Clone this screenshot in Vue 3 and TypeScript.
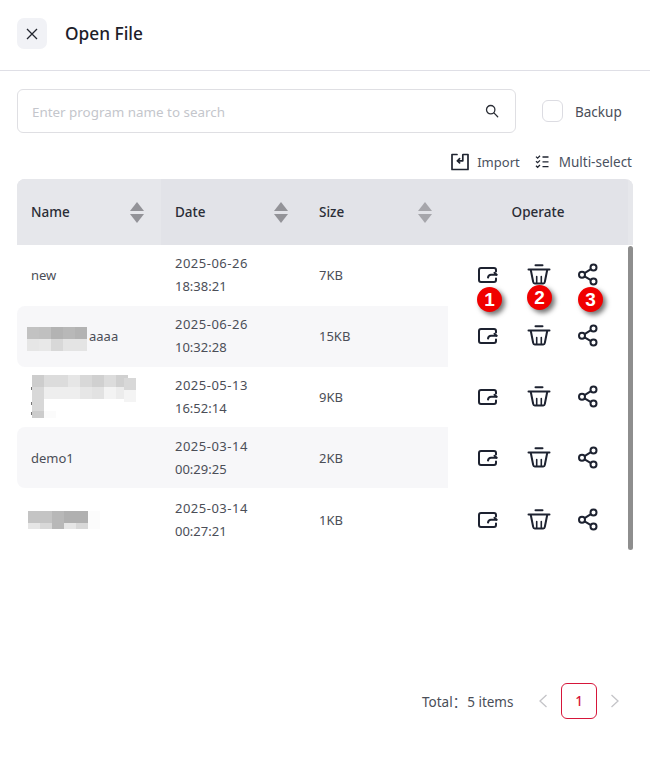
<script setup lang="ts">
interface Cell { x: number; y: number; w: number; h: number; c: string }
interface Row { name?: string; date: string; time: string; size: string; mosaic?: Cell[] }

function strip(y: number, h: number, x0: number, w: number, cs: string[]): Cell[] {
  return cs.map((c, i) => ({ x: x0 + i * w, y, w, h, c }))
}

const rows: Row[] = [
  { name: 'new', date: '2025-06-26', time: '18:38:21', size: '7KB' },
  {
    name: 'aaaa', date: '2025-06-26', time: '10:32:28', size: '15KB',
    mosaic: [
      ...strip(0, 12, 0, 12, ['#c2c2c2', '#c0c0c0', '#b3b3b3', '#b8b8b8', '#b3b3b3']),
      ...strip(12, 12, 0, 12, ['#e6e6e6', '#e8e8e8', '#d8d8d8', '#e4e4e4', '#e4e4e4'])
    ]
  },
  {
    date: '2025-05-13', time: '16:52:14', size: '9KB',
    mosaic: [
      ...strip(0, 12, 5, 12, ['#cdcdcd', '#dcdcdc', '#dcdcdc', '#e6e6e6', '#d8d8d8', '#d0d0d0', '#dcdcdc', '#d0d0d0']),
      ...strip(12, 12, 5, 12, ['#d8d8d8', '#eeeeee', '#eeeeee', '#eeeeee', '#e6e6e6', '#e2e2e2', '#f3f3f3', '#ececec']),
      { x: 97, y: 3, w: 12, h: 12, c: '#d8d8d8' },
      { x: 97, y: 15, w: 12, h: 12, c: '#f4f4f4' },
      { x: 5, y: 24, w: 12, h: 12, c: '#d8d8d8' },
      { x: 5, y: 36, w: 12, h: 7, c: '#cccccc' },
      { x: 17, y: 36, w: 12, h: 7, c: '#fbfbfb' },
      { x: 4, y: 12, w: 1, h: 3, c: '#777777' },
      { x: 4, y: 27, w: 1, h: 3, c: '#777777' },
      { x: 4, y: 37, w: 1, h: 3, c: '#777777' }
    ]
  },
  { name: 'demo1', date: '2025-03-14', time: '00:29:25', size: '2KB' },
  {
    date: '2025-03-14', time: '00:27:21', size: '1KB',
    mosaic: [
      ...strip(0, 12, 1, 12, ['#c4c4c4', '#c4c4c4', '#b8b8b8', '#b0b0b0', '#b0b0b0']),
      ...strip(12, 6, 1, 12, ['#e6e6e6', '#d8d8d8', '#b8b8b8', '#e6e6e6', '#d8d8d8']),
      { x: 61, y: 0, w: 12, h: 18, c: '#fcfcfc' }
    ]
  }
]

const headers = ['Name', 'Date', 'Size']
</script>

<template>
  <div class="page">
    <header class="head">
      <button class="close" type="button" aria-label="Close">
        <svg width="14" height="14" viewBox="0 0 14 14"><path d="M2 2l10 10M12 2L2 12" stroke="#23262f" stroke-width="1.3" fill="none" /></svg>
      </button>
      <h1 class="title">Open File</h1>
    </header>

    <div class="search-row">
      <div class="search">
        <span class="placeholder">Enter program name to search</span>
        <svg width="14" height="14" viewBox="0 0 14 14" fill="none" stroke="#2b2e36" stroke-width="1.3"><circle cx="5.7" cy="5.7" r="4.2" /><path d="M8.9 8.9l3.8 3.8" stroke-linecap="round" /></svg>
      </div>
      <label class="backup"><span class="check"></span><span class="backup-text">Backup</span></label>
    </div>

    <div class="tools">
      <span class="tool import">
        <svg width="18" height="18" viewBox="0 0 18 18" fill="none" stroke="#1f2430" stroke-width="1.7" stroke-linejoin="round" stroke-linecap="round"><path d="M6 1.500H1v15h16v-15h-5" /><path d="M11.800 2v5.800H6.500" /><path d="M8.600 5.700L6.500 7.800l2.100 2.100" /></svg>
        Import
      </span>
      <span class="tool multi">
        <svg width="14" height="14" viewBox="0 0 14 14" fill="none" stroke="#1f2430" stroke-width="1.3"><path d="M1 1.600l1.600 1.500L5 .8M1 6.200l1.600 1.500L5 5.400M1 10.800l1.600 1.500L5 10" /><path d="M7.500 2h6M7.500 6.800h6M7.500 11.600h6" /></svg>
        Multi-select
      </span>
    </div>

    <div class="table">
      <div class="thead">
        <div v-for="(h, i) in headers" :key="h" class="th" :class="{ first: i === 0, last: i === 2 }">
          <span>{{ h }}</span>
          <svg class="sort" width="14" height="21" viewBox="0 0 14 21"><path d="M7 0l7 9H0z" /><path d="M7 21l7-9H0z" /></svg>
        </div>
        <div class="th op">Operate</div>
        <div class="th gutter"></div>
      </div>
      <div class="tbody">
        <div class="list">
          <div v-for="(r, i) in rows" :key="i" class="row" :class="{ striped: i % 2 === 1 }">
            <div class="cell name">
              <span v-if="r.mosaic" class="mosaic">
                <i v-for="(m, j) in r.mosaic" :key="j" :style="{ left: m.x + 'px', top: m.y + 'px', width: m.w + 'px', height: m.h + 'px', background: m.c }"></i>
              </span>
              <span v-if="r.name" class="nm">{{ r.name }}</span>
            </div>
            <div class="cell date"><div class="day">{{ r.date }}</div><div>{{ r.time }}</div></div>
            <div class="cell size">{{ r.size }}</div>
            <div class="cell ops">
              <svg width="22" height="22" viewBox="0 0 22 22" fill="none" stroke="#1d2230" stroke-width="2" stroke-linecap="round" stroke-linejoin="round"><path d="M20 7.500V6a2 2 0 0 0-2-2H5a2 2 0 0 0-2 2v10a2 2 0 0 0 2 2h13a2 2 0 0 0 2-2v-1.500" /><path d="M12 13.500c.3-1.700 1.400-2.700 3-2.700h5.500" /><path d="M18.500 8.800l2 2" /></svg>
              <svg class="trash" width="24" height="24" viewBox="0 0 24 24" fill="none" stroke="#1d2230" stroke-width="2" stroke-linecap="round" stroke-linejoin="round"><path d="M1.500 6.500h21" /><path d="M8.500 2.300h7" /><path d="M3.800 7l2.400 12a1.600 1.600 0 0 0 1.600 1.400h8.400a1.600 1.600 0 0 0 1.600-1.400l2.400-12" /><path d="M9.700 13.500V20M14.300 13.500V20" stroke-width="1.600" /></svg>
              <svg class="share" width="22" height="24" viewBox="0 0 22 24" fill="none" stroke="#1d2230" stroke-width="2"><circle cx="16.500" cy="4.600" r="3" /><circle cx="5" cy="11.800" r="3" /><circle cx="16.500" cy="18.600" r="3" /><path d="M7.600 10.200l6.300-4M7.600 13.300l6.300 3.800" /></svg>
            </div>
          </div>
        </div>
        <div class="scrollbar"></div>
        <span class="badge b1">1</span>
        <span class="badge b2">2</span>
        <span class="badge b3">3</span>
      </div>
    </div>

    <div class="pager">
      <span class="total">Total：<span class="gap">5 items</span></span>
      <svg class="arrow" width="12" height="14" viewBox="0 0 12 14" fill="none" stroke="#c4c4c8" stroke-width="1.300"><path d="M9.500 1L3 7l6.500 6" /></svg>
      <span class="pg">1</span>
      <svg class="arrow" width="12" height="14" viewBox="0 0 12 14" fill="none" stroke="#c4c4c8" stroke-width="1.300"><path d="M2.500 1L9 7l-6.500 6" /></svg>
    </div>
  </div>
</template>

<style scoped>
.page {
  width: 650px;
  height: 757px;
  box-sizing: border-box;
  background: #fff;
  font-family: "Noto Sans", "Noto Sans CJK SC", sans-serif;
  color: #3a3d45;
  font-size: 13px;
  overflow: hidden;
}
.head {
  height: 71px;
  box-sizing: border-box;
  border-bottom: 1px solid #dfdfe6;
  display: flex;
  align-items: center;
  padding: 0 17px 3px;
}
.close {
  width: 30px;
  height: 31px;
  border: 0;
  padding: 0;
  border-radius: 7px;
  background: #f1f2f6;
  display: flex;
  align-items: center;
  justify-content: center;
}
.title {
  margin: 0 0 0 18px;
  font-size: 17.300px;
  font-weight: 500;
  color: #1d2029;
}
.search-row {
  display: flex;
  align-items: center;
  padding: 18px 0 0 17px;
}
.search {
  width: 499px;
  height: 44px;
  box-sizing: border-box;
  border: 1px solid #dfdfe3;
  border-radius: 6px;
  display: flex;
  align-items: center;
  justify-content: space-between;
  padding: 0 16px 0 14px;
}
.placeholder { color: #c4c6cc; font-size: 13.400px; padding-top: 2px; }
.backup {
  margin-left: 26px;
  display: flex;
  align-items: center;
  gap: 12px;
  font-size: 13.500px;
  color: #4a4e58;
}
.backup-text { padding-top: 2px; }
.check {
  width: 21px;
  height: 22px;
  box-sizing: border-box;
  border: 1px solid #dcdce2;
  border-radius: 6px;
}
.tools {
  display: flex;
  justify-content: flex-end;
  align-items: center;
  gap: 15px;
  height: 20px;
  margin: 19px 18px 7px 0;
  font-size: 13.500px;
  color: #4a5160;
}
.tool { display: flex; align-items: center; }
.import { gap: 8px; font-size: 13px; }
.multi { gap: 10px; }
.table { margin: 0 17px; width: 616px; }
.thead {
  display: flex;
  height: 66px;
  border-radius: 8px 8px 0 0;
  overflow: hidden;
  background: #e2e3e8;
  font-weight: 500;
  font-size: 13.500px;
  color: #2a2d36;
}
.th {
  width: 144px;
  box-sizing: border-box;
  padding: 0 17px 0 14px;
  display: flex;
  align-items: center;
  justify-content: space-between;
}
.th.first { background: #e6e7eb; }
.sort { fill: #939398; }
.last .sort { fill: #a6a6ab; }
.th.op { width: 179px; justify-content: center; padding: 0 1px 0 0; }
.th.gutter { width: 5px; padding: 0; background: #e6e7eb; }
.tbody { position: relative; height: 304px; }
.list { width: 611px; }
.row {
  display: flex;
  height: 60.800px;
  border-radius: 8px;
  align-items: center;
  color: #4b4e57;
}
.row:last-child { height: 64px; }
.row.striped { background: linear-gradient(90deg, #f7f7f9 431px, transparent 431px); }
.cell { width: 144px; box-sizing: border-box; padding-left: 14px; flex: none; }
.name { position: relative; display: flex; align-items: center; height: 100%; }
.date { line-height: 23px; }
.day { letter-spacing: 0.500px; }
.ops {
  width: 167px;
  padding: 0 0 0 27px;
  display: flex;
  align-items: center;
}
.trash { margin-left: 29px; }
.share { margin-left: 26px; }
.mosaic { display: block; width: 0; height: 0; }
.mosaic i { position: absolute; display: block; }
.row:nth-child(2) .mosaic { position: absolute; left: 10px; top: 21.200px; }
.row:nth-child(2) .nm { margin-left: 58px; }
.row:nth-child(3) .mosaic { position: absolute; left: 10px; top: 8.400px; }
.row:nth-child(5) .mosaic { position: absolute; left: 10px; top: 22.800px; }
.scrollbar {
  position: absolute;
  right: 0;
  top: 1px;
  width: 5px;
  height: 304px;
  border-radius: 3px;
  background: #8e8e8e;
}
.badge {
  position: absolute;
  width: 25px;
  height: 25px;
  border-radius: 50%;
  background: #f00000;
  color: #fff;
  font: 700 19px/25px "Liberation Sans", sans-serif;
  text-align: center;
  box-shadow: 3px 3px 5px rgba(0, 0, 0, 0.55);
}
.b1 { left: 460px; top: 42px; }
.b2 { left: 510px; top: 40px; }
.b3 { left: 561px; top: 42px; }
.pager {
  display: flex;
  align-items: center;
  margin: 134px 0 0 0;
  padding-left: 422px;
  color: #4a4e58;
  font-size: 13.500px;
}
.total { width: 115px; }
.gap { margin-left: 1px; }
.arrow { flex: none; }
.pg {
  width: 36px;
  height: 36px;
  box-sizing: border-box;
  margin: 0 12px;
  border: 1px solid #d6163a;
  border-radius: 6px;
  color: #d6163a;
  font-weight: 500;
  display: flex;
  align-items: center;
  justify-content: center;
}
</style>
